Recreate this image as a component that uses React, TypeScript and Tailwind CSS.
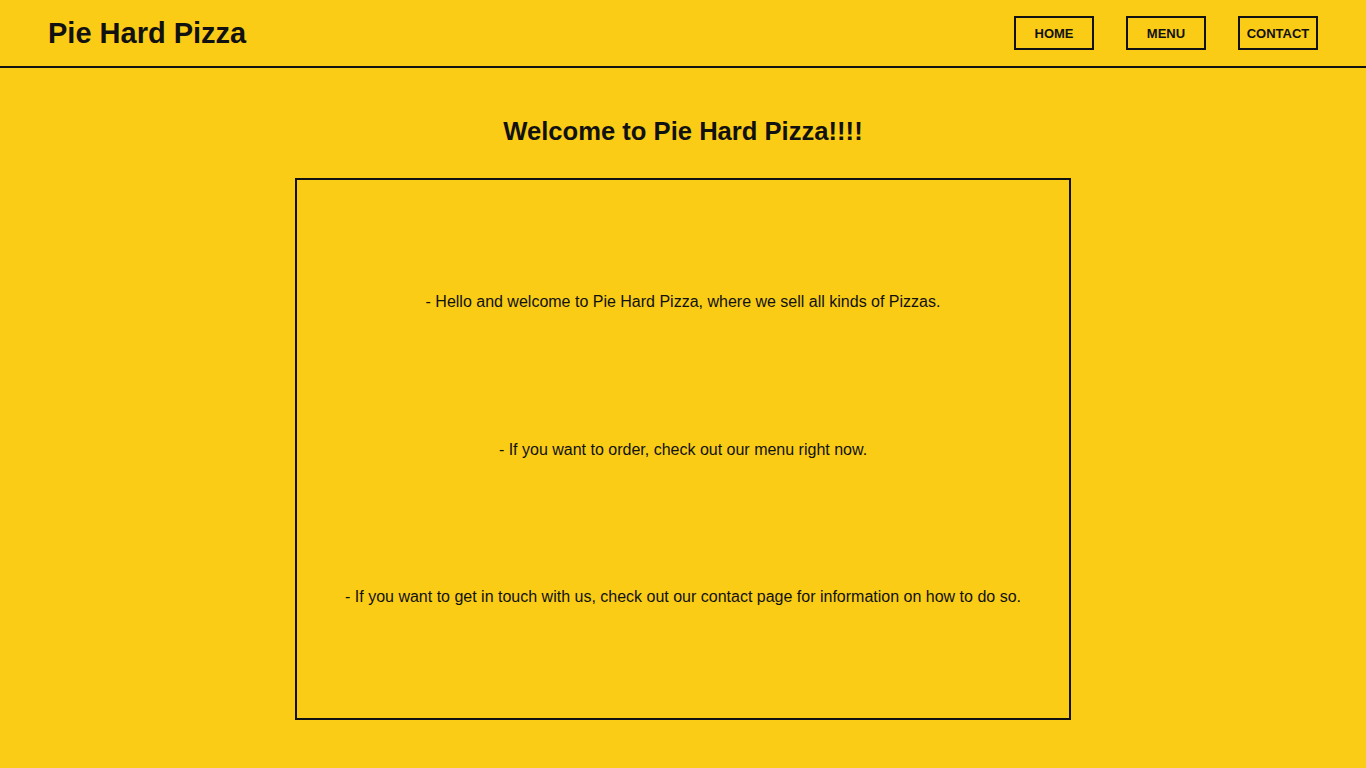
export default function App() {
  const navItems = ["HOME", "MENU", "CONTACT"]

  return (
    <div className="min-h-screen bg-[#facc15] text-[#111111] font-['Liberation_Sans',Arial,sans-serif]">
      {/* Header */}
      <header className="flex h-[68px] items-center justify-between border-b-2 border-[#111111] px-12">
        <h1 className="text-[29px] font-bold leading-none">Pie Hard Pizza</h1>
        <nav className="flex gap-8">
          {navItems.map((item) => (
            <a
              key={item}
              href="#"
              className="flex h-[34px] w-20 items-center justify-center border-2 border-[#111111] pt-[2px] text-[13px] font-bold"
            >
              {item}
            </a>
          ))}
        </nav>
      </header>

      <main className="flex flex-col items-center pt-[46px]">
        <h2 className="text-[25.6px] font-bold leading-[34px]">
          Welcome to Pie Hard Pizza!!!!
        </h2>
        <div className="mt-[30px] flex w-[776px] flex-col gap-[129.5px] border-2 border-[#111111] pt-[113px] pb-[112px] text-center text-base leading-[18px]">
          <p>- Hello and welcome to Pie Hard Pizza, where we sell all kinds of Pizzas.</p>
          <p>- If you want to order, check out our menu right now.</p>
          <p>- If you want to get in touch with us, check out our contact page for information on how to do so.</p>
        </div>
      </main>
    </div>
  )
}
